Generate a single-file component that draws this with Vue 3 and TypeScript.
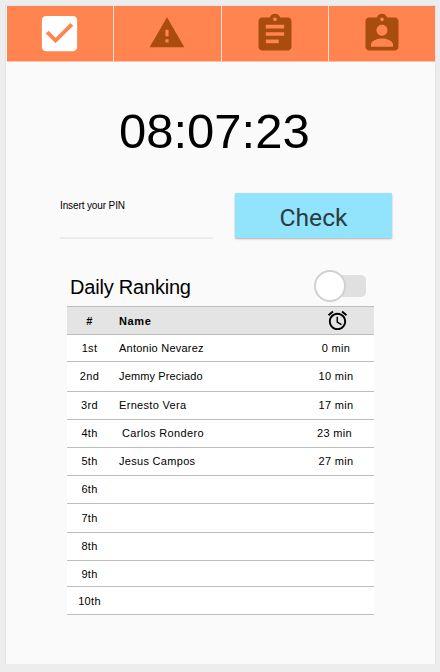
<script setup lang="ts">
import { ref } from 'vue'

interface Row {
  place: string
  name: string
  time: string
  height: number
  top: number
  spacing?: number
  nameOffset?: number
  timeOffset?: number
}

const weekly = ref(false)
const pin = ref('')
const rows: Row[] = [
  { place: '1st', name: 'Antonio Nevarez', time: '0 min', height: 27, top: 6, spacing: 0.23 },
  { place: '2nd', name: 'Jemmy Preciado', time: '10 min', height: 30, top: 7, spacing: 0.13 },
  { place: '3rd', name: 'Ernesto Vera', time: '17 min', height: 28, top: 6, spacing: 0.32 },
  { place: '4th', name: 'Carlos Rondero', time: '23 min', height: 28, top: 6, spacing: 0.35, nameOffset: 3, timeOffset: -3 },
  { place: '5th', name: 'Jesus Campos', time: '27 min', height: 28, top: 6, spacing: 0.3 },
  { place: '6th', name: '', time: '', height: 28, top: 6 },
  { place: '7th', name: '', time: '', height: 29, top: 7 },
  { place: '8th', name: '', time: '', height: 28, top: 6 },
  { place: '9th', name: '', time: '', height: 26, top: 6 },
  { place: '10th', name: '', time: '', height: 28, top: 7 },
]
</script>

<template>
  <div class="screen">
    <main class="panel">
      <nav class="tabs">
        <button class="tab active" aria-label="Check in">
          <svg width="47" height="47" viewBox="0 0 24 24"><path d="M19 3H5c-1.11 0-2 .9-2 2v14c0 1.1.89 2 2 2h14c1.11 0 2-.9 2-2V5c0-1.1-.89-2-2-2zm-9 14l-5-5 1.41-1.41L10 14.17l7.59-7.59L19 8l-9 9z" /></svg>
        </button>
        <button class="tab warn" aria-label="Warnings">
          <svg width="38" height="38" viewBox="0 0 24 24"><path d="M1 21h22L12 2 1 21zm12-3h-2v-2h2v2zm0-4h-2v-4h2v4z" /></svg>
        </button>
        <button class="tab" aria-label="Reports">
          <svg width="44" height="44" viewBox="0 0 24 24"><path d="M19 3h-4.18C14.4 1.84 13.3 1 12 1c-1.3 0-2.4.84-2.82 2H5c-1.1 0-2 .9-2 2v14c0 1.1.9 2 2 2h14c1.1 0 2-.9 2-2V5c0-1.1-.9-2-2-2zm-7 0c.55 0 1 .45 1 1s-.45 1-1 1-1-.45-1-1 .45-1 1-1zm2 14H7v-2h7v2zm3-4H7v-2h10v2zm0-4H7V7h10v2z" /></svg>
        </button>
        <button class="tab" aria-label="Profile">
          <svg width="44" height="44" viewBox="0 0 24 24"><path d="M19 3h-4.18C14.4 1.84 13.3 1 12 1c-1.3 0-2.4.84-2.82 2H5c-1.1 0-2 .9-2 2v14c0 1.1.9 2 2 2h14c1.1 0 2-.9 2-2V5c0-1.1-.9-2-2-2zm-7 0c.55 0 1 .45 1 1s-.45 1-1 1-1-.45-1-1 .45-1 1-1zm0 4c1.66 0 3 1.34 3 3s-1.34 3-3 3-3-1.34-3-3 1.34-3 3-3zm6 12H6v-1.4c0-2 4-3.1 6-3.1s6 1.1 6 3.1V19z" /></svg>
        </button>
      </nav>

      <div class="clock">08:07:23</div>

      <form class="entry" @submit.prevent>
        <label class="pin">
          <span>Insert your PIN</span>
          <input v-model="pin" type="password" />
        </label>
        <button class="check">Check</button>
      </form>

      <section class="ranking">
        <header class="title-row">
          <h2>Daily Ranking</h2>
          <button class="switch" :class="{ on: weekly }" aria-label="Range" @click="weekly = !weekly"><i /></button>
        </header>
        <div class="row head">
          <span class="place">#</span>
          <span class="name">Name</span>
          <span class="time">
            <svg width="23" height="23" viewBox="0 0 24 24"><path d="M22 5.72l-4.6-3.86-1.29 1.53 4.6 3.86L22 5.72zM7.88 3.39L6.6 1.86 2 5.71l1.29 1.53 4.59-3.85zM12.5 8H11v6l4.75 2.85.75-1.23-4-2.37V8zM12 4c-4.97 0-9 4.03-9 9s4.02 9 9 9c4.97 0 9-4.03 9-9s-4.03-9-9-9zm0 16c-3.87 0-7-3.13-7-7s3.13-7 7-7 7 3.13 7 7-3.13 7-7 7z" /></svg>
          </span>
        </div>
        <div v-for="row in rows" :key="row.place" class="row" :style="{ height: row.height + 'px', paddingTop: row.top + 'px' }">
          <span class="place">{{ row.place }}</span>
          <span class="name" :style="{ paddingLeft: (row.nameOffset ?? 0) + 'px', letterSpacing: (row.spacing ?? 0) + 'px' }">{{ row.name }}</span>
          <span class="time" :style="{ marginLeft: (row.timeOffset ?? 0) + 'px' }">{{ row.time }}</span>
        </div>
      </section>
    </main>
  </div>
</template>

<style>
body {
  background: #ededed;
}
</style>

<style scoped>
.screen {
  box-sizing: border-box;
  width: 440px;
  height: 672px;
  padding: 5px 4px 8px 5px;
  background: #ededed;
  font-family: 'Liberation Sans', Arial, sans-serif;
  color: #000;
}
.panel {
  box-sizing: border-box;
  height: 659px;
  border: 1px solid #e3e3e3;
  border-bottom: 0;
  background: #fafafa;
}
button {
  padding: 0;
  border: 0;
  font: inherit;
}
.tabs {
  display: grid;
  grid-template-columns: 106px 107px 106px 106px;
  column-gap: 1px;
  height: 55px;
  margin-left: 1px;
  border-bottom: 1px solid #ffc3ac;
  background: #ffe0d4;
}
.tab {
  display: flex;
  align-items: center;
  justify-content: center;
  background: #ff8450;
}
.tab svg {
  display: block;
  fill: #a84d0e;
}
.tab.active {
  padding-right: 2px;
}
.tab.active svg {
  fill: #fff;
}
.tab.warn {
  padding-right: 2px;
}
.tab.warn svg {
  margin-top: -1px;
}
.clock {
  margin-top: 40px;
  height: 58px;
  padding-left: 113px;
  font-size: 49px;
  line-height: 58px;
  white-space: nowrap;
}
.entry {
  display: flex;
  margin: 32px 0 0 54px;
  height: 48px;
}
.pin {
  box-sizing: border-box;
  width: 153px;
  height: 47px;
  padding-top: 7px;
  border-bottom: 2px solid #ececec;
  font-size: 10px;
  line-height: 14px;
  letter-spacing: -0.12px;
}
.pin span {
  display: block;
}
.pin input {
  width: 100%;
  height: 22px;
  padding: 0;
  border: 0;
  outline: 0;
  background: transparent;
}
.check {
  width: 157px;
  height: 45px;
  margin: 1px 0 0 22px;
  padding-top: 4px;
  border-radius: 1px;
  background: #92e4fc;
  box-shadow: 0 1px 2px rgba(0, 0, 0, 0.3);
  color: #2b3c41;
  font-family: Roboto, sans-serif;
  font-size: 24.7px;
}
.ranking {
  width: 307px;
  margin: 28px 0 0 61px;
}
.title-row {
  display: flex;
  align-items: center;
  justify-content: space-between;
  height: 36px;
  padding: 0 8px 2px 3px;
}
h2 {
  margin: 2px 0 0;
  font-size: 20px;
  font-weight: 400;
  line-height: 24px;
  letter-spacing: -0.2px;
}
.switch {
  display: flex;
  align-items: center;
  width: 48px;
  height: 22px;
  border-radius: 5px;
  background: #e0e0e0;
}
.switch i {
  box-sizing: border-box;
  flex: none;
  width: 32px;
  height: 32px;
  margin-left: -4px;
  border: 2px solid #d0d0d0;
  border-radius: 50%;
  background: #fff;
}
.switch.on i {
  margin-left: 20px;
}
.row {
  box-sizing: border-box;
  display: grid;
  grid-template-columns: 45px 179px 90px;
  align-items: start;
  border-bottom: 1px solid #bdbdbd;
  background: #fff;
  font-size: 11px;
  line-height: 14px;
  letter-spacing: 0.3px;
  white-space: nowrap;
}
.row.head {
  align-items: center;
  height: 29px;
  border-top: 1px solid #bdbdbd;
  background: #e4e4e4;
  font-weight: 700;
  letter-spacing: 0.6px;
}
.place,
.time {
  text-align: center;
}
.name {
  margin-left: 7px;
}
.time svg {
  display: block;
  margin: 0 auto;
  padding-left: 2px;
}
</style>
